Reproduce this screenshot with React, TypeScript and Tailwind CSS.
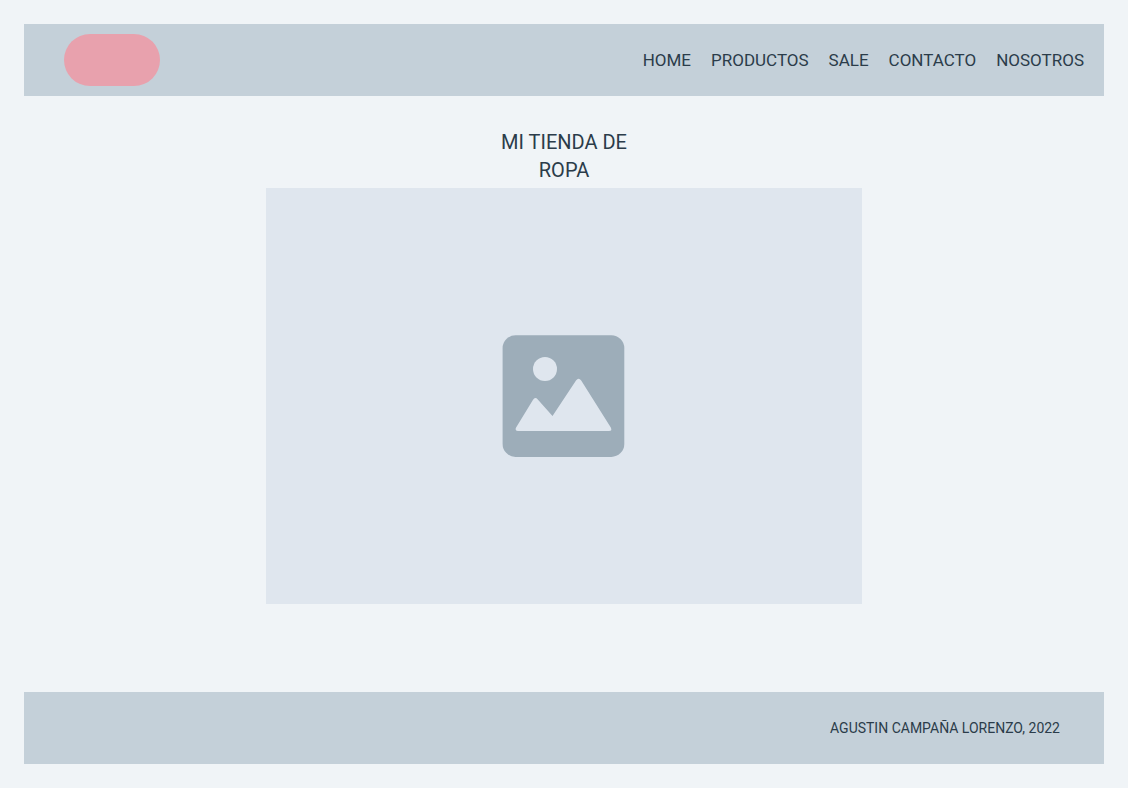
const links = [
  { label: "HOME", href: "#home" },
  { label: "PRODUCTOS", href: "#productos" },
  { label: "SALE", href: "#sale" },
  { label: "CONTACTO", href: "#contacto" },
  { label: "NOSOTROS", href: "#nosotros" },
];

function ImagePlaceholder() {
  return (
    <svg
      className="h-[122px] w-[122px] overflow-visible"
      viewBox="0 0 122 122"
      role="img"
      aria-label="Imagen"
    >
      <rect x="-0.4" y="0.2" width="121.7" height="121.7" rx="13" fill="#9dadb9" />
      <circle cx="42" cy="34" r="12" fill="#dfe6ee" />
      <path
        d="M15 96Q12 96 12.8 93L29.9 65Q32 61.5 34.8 64.4L49.5 81L73 45.5Q75.6 41.8 78.2 45.5L107.8 92.5Q109.5 96 106 96Z"
        fill="#dfe6ee"
      />
    </svg>
  );
}

export default function App() {
  return (
    <div className="flex min-h-screen flex-col bg-[#f0f4f7] p-6 font-['Roboto',sans-serif] text-[#2b3c4a]">
      <header className="flex h-18 items-center justify-between bg-[#c4d0d9] pr-5 pl-10">
        <a
          href="#home"
          aria-label="Inicio"
          className="h-13 w-24 rounded-full bg-[#e8a1ad]"
        />
        <nav className="flex gap-5 text-[17px] leading-6">
          {links.map((link) => (
            <a key={link.label} href={link.href}>
              {link.label}
            </a>
          ))}
        </nav>
      </header>

      <main className="flex grow flex-col items-center pt-8 pb-22">
        <h1 className="w-36 text-center text-[20px] leading-7">
          MI TIENDA DE ROPA
        </h1>
        <div className="mt-1 flex w-full max-w-[596px] grow items-center justify-center bg-[#dfe6ee]">
          <ImagePlaceholder />
        </div>
      </main>

      <footer className="flex h-18 items-center justify-end bg-[#c4d0d9] pr-11 text-[14px] leading-6">
        <p>AGUSTIN CAMPAÑA LORENZO, 2022</p>
      </footer>
    </div>
  );
}
